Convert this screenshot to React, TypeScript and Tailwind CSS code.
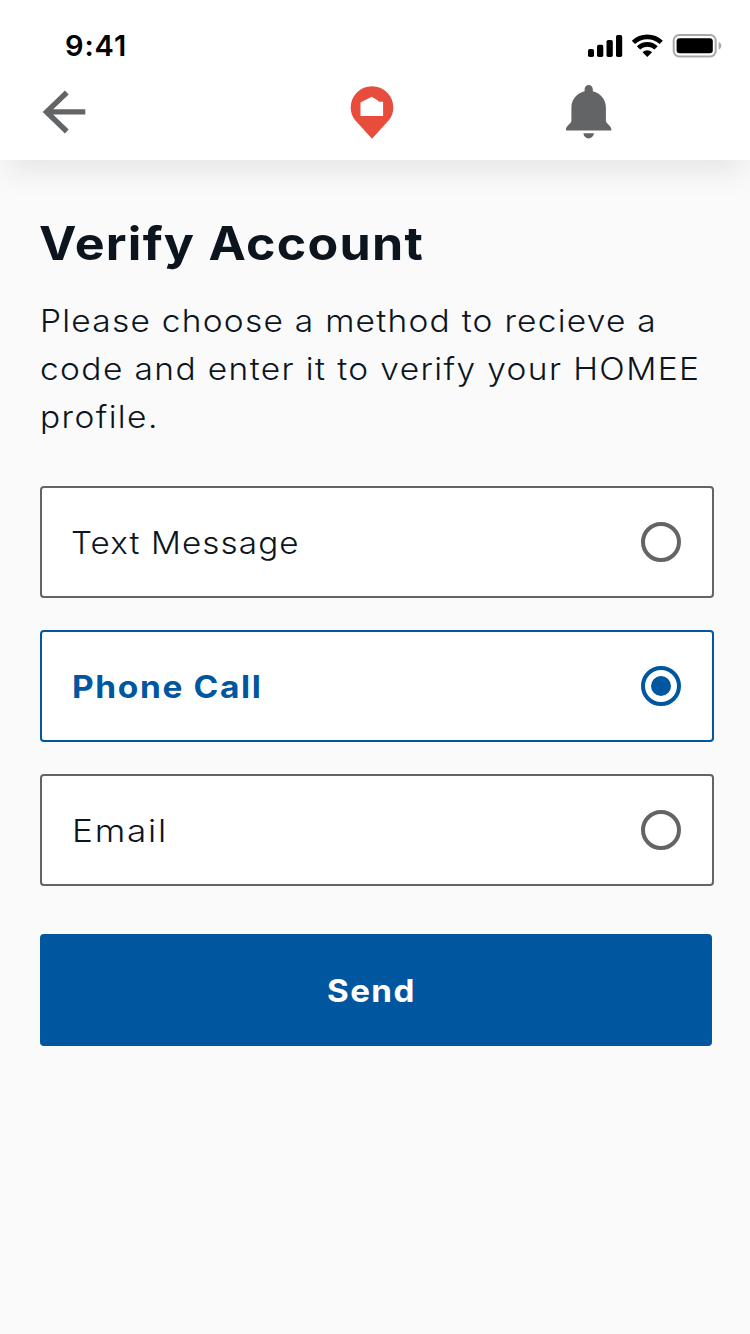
import { useState } from 'react';

const methods = [
    { id: 'text', label: 'Text Message', style: 'scale-x-[1.07] tracking-[1.05px] -ml-px' },
    { id: 'phone', label: 'Phone Call', style: 'scale-x-[1.08] tracking-[1.5px]' },
    { id: 'email', label: 'Email', style: 'scale-x-[1.13] tracking-[1.6px]' },
];

function StatusIcons() {
    return (
        <svg width="136" height="26" viewBox="587 33 136 26" fill="none">
            {/* Signal */}
            <g fill="#000">
                <rect x="588" y="49" width="6" height="8" rx="1.7" />
                <rect x="597" y="44.7" width="6.3" height="12.3" rx="1.7" />
                <rect x="606.5" y="40" width="6.3" height="17" rx="1.7" />
                <rect x="616" y="35" width="6.2" height="22" rx="1.7" />
            </g>
            {/* Wifi */}
            <g stroke="#000" strokeWidth="4.7">
                <path d="M633.4 42.4a20 20 0 0 1 27.8 0" />
                <path d="M638.5 47.9a12.6 12.6 0 0 1 17.6 0" />
            </g>
            <path d="M647.3 57l-4.8-4.8a6.8 6.8 0 0 1 9.6 0z" fill="#000" />
            {/* Battery */}
            <rect x="673.7" y="35" width="42" height="21.5" rx="5.5" stroke="#a8a8a8" strokeWidth="2" />
            <rect x="676.6" y="38.2" width="36.2" height="15" rx="3" fill="#000" />
            <path d="M718.7 42c1.6.7 2.6 2 2.6 3.8s-1 3.1-2.6 3.8z" fill="#a8a8a8" />
        </svg>
    );
}

function Header() {
    return (
        <header className="relative h-40 bg-white shadow-[0_16px_30px_-6px_rgba(0,0,0,0.09)]">
            <div className="flex h-[66px] items-start justify-between pt-[33px] pr-[27px] pl-[65px]">
                <span className="text-[29px] leading-[26px] font-semibold tracking-[0.9px] text-black">9:41</span>
                <StatusIcons />
            </div>
            <div className="flex items-start pt-[18px] pl-[42px]">
                <button aria-label="Back">
                    <svg width="46" height="56" viewBox="42 84 46 56" fill="none" stroke="#636466" strokeWidth="5.4">
                        <path d="M85.3 111.9H46M66.8 92.5L46.6 111.9l20.2 19.6" />
                    </svg>
                </button>
                <svg className="ml-[261px]" width="46" height="56" viewBox="349 84 46 56">
                    <path d="M372 138.8l-16.8-18.6c-3-3.5-4.5-7.8-4.5-12.7a21.3 21.3 0 0 1 42.6 0c0 4.9-1.5 9.2-4.5 12.7z" fill="#e84c3d" />
                    <path d="M360.5 102.4l11.3-5.7 6.8 4.2v.9h4.5v14.3h-22.6z" fill="#fff" />
                </svg>
                <button className="ml-[170px]" aria-label="Notifications">
                    <svg width="48" height="56" viewBox="565 84 48 56" fill="#636466">
                        <path d="M584.6 89.5a4.1 4.5 0 0 1 8.2 0v1.8c8 2.1 13.1 8.3 13.1 16.2v13.2c0 2.4 5.4 5.6 5.4 8.2v1.7H566v-1.7c0-2.6 5.4-5.8 5.4-8.2v-13.2c0-7.9 5.2-14.1 13.2-16.2z" />
                        <path d="M583.3 133.2H594c-.7 3.4-2.6 5.2-5.4 5.2s-4.6-1.8-5.3-5.2z" />
                    </svg>
                </button>
            </div>
        </header>
    );
}

export default function App() {
    const [selected, setSelected] = useState('phone');

    return (
        <div className="min-h-[1334px] w-[750px] bg-[#fafafa] font-['Inter','Liberation_Sans',sans-serif] text-[#0c151e]">
            <Header />
            <main className="pt-[55px] pr-9 pl-10">
                <h1 className="-ml-px origin-left scale-x-[1.09] text-[46px] leading-[56px] font-bold tracking-[1.15px] whitespace-nowrap">Verify Account</h1>
                <p className="mt-[26px] origin-left scale-x-[1.08] text-[31px] leading-[48px] font-[400] tracking-[1.2px] whitespace-nowrap">
                    <span className="block font-[360] tracking-[1.16px]">Please choose a method to recieve a</span>
                    <span className="block font-[360] tracking-[1.29px]">code and enter it to verify your HOMEE</span>
                    <span className="block font-[360] tracking-[1.3px]">profile.</span>
                </p>

                {/* Methods */}
                <div className="mt-[45px] flex flex-col gap-8" role="radiogroup">
                    {methods.map((method) => {
                        const active = method.id === selected;
                        return (
                            <button
                                key={method.id}
                                role="radio"
                                aria-checked={active}
                                onClick={() => setSelected(method.id)}
                                className={`flex h-28 items-center justify-between rounded border-2 bg-white pr-[31px] pl-[30px] text-[31px] ${active ? 'border-[#00579f] font-bold text-[#00579f]' : 'border-[#636466] font-[360]'}`}
                            >
                                <span className={`origin-left pt-0.5 ${method.style}`}>{method.label}</span>
                                <span className={`flex size-10 items-center justify-center rounded-full border-4 ${active ? 'border-[#00579f]' : 'border-[#636466]'}`}>
                                    {active && <span className="size-5 rounded-full bg-[#00579f]" />}
                                </span>
                            </button>
                        );
                    })}
                </div>

                <button className="mt-12 h-28 w-[672px] rounded bg-[#00579f] pt-0.5 pr-2.5 text-[31px] font-bold tracking-[1.3px] text-white">
                    <span className="inline-block scale-x-[1.07]">Send</span>
                </button>
            </main>
        </div>
    );
}
